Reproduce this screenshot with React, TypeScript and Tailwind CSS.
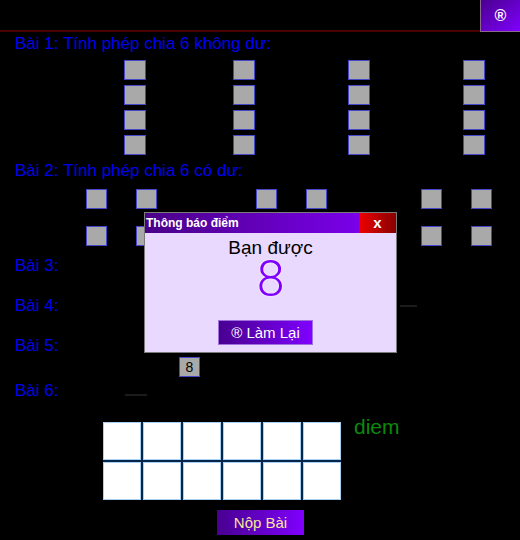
import React from 'react';

const font = { fontFamily: '"Liberation Sans", Arial, sans-serif' };

function Box({ className = '' }: { className?: string }) {
  return <div className={`bg-[#a9a9a9] border border-[#4646c8] ${className}`} />;
}

function Label({ children, className = '' }: { children: React.ReactNode; className?: string }) {
  return <div className={`text-[17px] leading-[18px] h-[18px] text-[#0000f0] whitespace-nowrap ${className}`}>{children}</div>;
}

const bai1Cols = ['', 'ml-[87px]', 'ml-[93px]', 'ml-[93px]'];
const bai2Gaps = ['', 'ml-[29px]', 'ml-[99px]', 'ml-[29px]', 'ml-[94px]', 'ml-[29px]'];

function DiemDialog() {
  return (
    <div className="absolute left-[144px] top-[212px] w-[253px] h-[141px] border border-[#7a7a7a] bg-[#ead9fe] flex flex-col">
      <div className="flex h-[20px]">
        <div className="flex-1 bg-gradient-to-r from-[#4a0088] to-[#7a00ea] text-white font-bold text-[12px] leading-[16px] pt-[2px] pl-[1px]">
          Thông báo điểm
        </div>
        <button className="w-[37px] bg-gradient-to-r from-[#f00000] to-[#880000] text-white font-bold text-[15px] leading-[18px]">
          x
        </button>
      </div>
      <div className="flex flex-col items-center">
        <p className="text-[19px] leading-[20px] text-black mt-[5px]">Bạn được</p>
        <p
          className="text-[50px] leading-[42px] text-[#8000ff] font-light"
          style={{ fontFamily: 'Roboto, "Liberation Sans", sans-serif', textShadow: '0 0 2px #fff' }}
        >
          8
        </p>
        <button className="mt-[20px] -ml-[10px] w-[95px] h-[25px] border border-[#a070e0] bg-gradient-to-r from-[#480090] to-[#8000ff] text-white text-[15px] leading-[20px]">
          ® Làm Lại
        </button>
      </div>
    </div>
  );
}

export default function App() {
  return (
    <div className="relative w-[520px] h-[540px] bg-black overflow-hidden" style={font}>
      {/* thanh trên */}
      <div className="flex h-[32px]">
        <div className="flex-1 border-b-2 border-[#4a0000]" />
        <button className="w-[40px] h-[32px] border-l border-b border-[#8a6a8a] bg-gradient-to-br from-[#4a0090] to-[#8000ff] text-white font-bold text-[16px] leading-[20px]">
          ®
        </button>
      </div>

      {/* Bài 1 */}
      <Label className="ml-[15px] mt-[3px]">Bài 1: Tính phép chia 6 không dư:</Label>
      <div className="flex pl-[124px] mt-[7px]">
        {bai1Cols.map((ml, c) => (
          <div key={c} className={`flex flex-col gap-[5px] ${ml}`}>
            {[0, 1, 2, 3].map((r) => <Box key={r} className="w-[22px] h-[20px]" />)}
          </div>
        ))}
      </div>

      {/* Bài 2 */}
      <Label className="ml-[15px] mt-[7px]">Bài 2: Tính phép chia 6 có dư:</Label>
      <div className="flex flex-col gap-[17px] pl-[86px] mt-[9px]">
        {[0, 1].map((r) => (
          <div key={r} className="flex">
            {bai2Gaps.map((ml, i) => <Box key={i} className={`w-[21px] h-[20px] ${ml}`} />)}
          </div>
        ))}
      </div>

      {/* Bài 3 - 6 */}
      <Label className="ml-[15px] mt-[11px]">Bài 3:</Label>
      <div className="flex items-start pl-[15px] mt-[22px] h-[18px]">
        <Label className="w-[385px]">Bài 4:</Label>
        <div className="w-[17px] h-[2px] bg-[#1c1c1c] mt-[8px]" />
      </div>
      <Label className="ml-[15px] mt-[22px]">Bài 5:</Label>
      <div className="ml-[179px] mt-[2px] w-[21px] h-[20px] bg-[#a9a9a9] border border-[#4646c8] text-black text-[14px] leading-[18px] text-center">
        8
      </div>
      <div className="flex items-start pl-[15px] mt-[5px] h-[18px]">
        <Label className="w-[110px]">Bài 6:</Label>
        <div className="w-[22px] h-[2px] bg-[#1c1c1c] mt-[12px]" />
      </div>

      {/* bảng điểm */}
      <div className="flex items-start pl-[103px] mt-[22px]">
        <div className="grid grid-cols-6 gap-[2px] w-[238px] bg-[#06264a]">
          {Array.from({ length: 12 }).map((_, i) => (
            <div key={i} className="h-[38px] bg-white border border-[#a8d0f4]" />
          ))}
        </div>
        <span className="ml-[13px] -mt-[7px] text-[21px] leading-[24px] text-[#0a8a0a]">diem</span>
      </div>

      <button className="block ml-[217px] mt-[10px] w-[87px] h-[25px] bg-gradient-to-r from-[#480090] to-[#8000ff] text-[#f4e79a] text-[15px] leading-[20px]">
        Nộp Bài
      </button>

      <DiemDialog />
    </div>
  );
}
